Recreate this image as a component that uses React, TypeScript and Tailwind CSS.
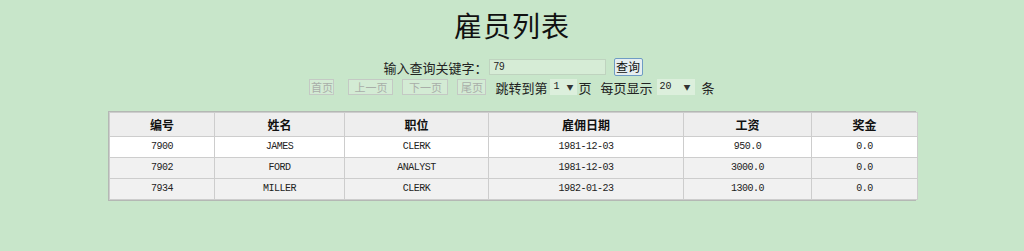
import React from 'react'

const cjk = { fontFamily: '"Noto Sans CJK SC", "Liberation Sans", sans-serif' }
const mono = { fontFamily: '"Liberation Mono", "Noto Sans CJK SC", monospace' }

const rows = [
  { no: '7900', name: 'JAMES', job: 'CLERK', date: '1981-12-03', sal: '950.0', comm: '0.0' },
  { no: '7902', name: 'FORD', job: 'ANALYST', date: '1981-12-03', sal: '3000.0', comm: '0.0' },
  { no: '7934', name: 'MILLER', job: 'CLERK', date: '1982-01-23', sal: '1300.0', comm: '0.0' },
]

const cols = [
  { label: '编号', w: 'w-[105px]' },
  { label: '姓名', w: 'w-[130px]' },
  { label: '职位', w: 'w-[144px]' },
  { label: '雇佣日期', w: 'w-[195px]' },
  { label: '工资', w: 'w-[128px]' },
  { label: '奖金', w: 'w-[106px]' },
]

function PageBtn({ label, w }: { label: string; w: string }) {
  return (
    <span
      className={`flex h-[16px] ${w} shrink-0 items-center justify-center whitespace-nowrap border border-[#c4c9c4] bg-[#d3ebd4] text-[11px] leading-none text-[#a9aea9]`}
    >
      {label}
    </span>
  )
}

function FakeSelect({ value, w }: { value: string; w: string }) {
  return (
    <span className={`flex h-[16px] ${w} shrink-0 items-center justify-between bg-[#dcefdc] pl-[3px] pr-[4px]`}>
      <span className="text-[10px] leading-none text-[#222]" style={mono}>{value}</span>
      <span className="text-[7px] leading-none text-[#333]">▼</span>
    </span>
  )
}

export default function App() {
  return (
    <div className="h-[251px] w-full bg-[#c8e6ca] text-black" style={cjk}>
      <h1 className="pt-[11px] text-center text-[28px] font-normal leading-[28px] tracking-[1px] text-[#111]">
        雇员列表
      </h1>

      {/* search row */}
      <div className="mt-[19px] flex h-[18px] items-center justify-center">
        <span className="ml-[2px] text-[13px] leading-none text-[#222]">输入查询关键字：</span>
        <span className="ml-[1px] flex h-[16px] w-[117px] items-center border border-[#bfd3bf] bg-[#d6ecd6] pl-[4px]">
          <span className="text-[10px] leading-none text-[#222]" style={{ fontFamily: '"Liberation Sans", sans-serif' }}>79</span>
        </span>
        <span className="ml-[8px] flex h-[18px] w-[29px] items-center justify-center rounded-[2px] border border-[#6f9cc4] bg-[#e6eef0] text-[12px] leading-none text-[#111]">
          查询
        </span>
      </div>

      {/* pagination row */}
      <div className="mt-[3px] flex h-[16px] items-center justify-center whitespace-nowrap">
        <PageBtn label="首页" w="w-[25px]" />
        <span className="w-[14px] shrink-0" />
        <PageBtn label="上一页" w="w-[45px]" />
        <span className="w-[9px] shrink-0" />
        <PageBtn label="下一页" w="w-[46px]" />
        <span className="w-[9px] shrink-0" />
        <PageBtn label="尾页" w="w-[29px]" />
        <span className="ml-[9px] text-[13px] leading-none text-[#222]">跳转到第</span>
        <span className="ml-[3px]"><FakeSelect value="1" w="w-[27px]" /></span>
        <span className="ml-[1px] text-[13px] leading-none text-[#222]">页</span>
        <span className="ml-[9px] text-[13px] leading-none text-[#222]">每页显示</span>
        <span className="ml-[4px]"><FakeSelect value="20" w="w-[38px]" /></span>
        <span className="ml-[7px] text-[13px] leading-none text-[#222]">条</span>
      </div>

      {/* table */}
      <div className="mx-auto mt-[16px] w-[808px] border border-[#b4b8b4] bg-white">
        <table className="w-full table-fixed border-collapse">
          <thead>
            <tr className="h-[24px] bg-[#eeeeee]">
              {cols.map((c) => (
                <th
                  key={c.label}
                  className={`${c.w} border border-[#cdcdcd] text-center text-[12px] font-bold leading-none text-[#111]`}
                >
                  {c.label}
                </th>
              ))}
            </tr>
          </thead>
          <tbody>
            {rows.map((r, i) => (
              <tr key={r.no} className={i === 0 ? 'h-[21px] bg-white' : 'h-[21px] bg-[#f1f1f1]'}>
                {[r.no, r.name, r.job, r.date, r.sal, r.comm].map((v, j) => (
                  <td
                    key={j}
                    className="border border-[#cdcdcd] text-center text-[10px] leading-none tracking-[-0.5px] text-[#222]"
                    style={mono}
                  >
                    {v}
                  </td>
                ))}
              </tr>
            ))}
          </tbody>
        </table>
      </div>
    </div>
  )
}
